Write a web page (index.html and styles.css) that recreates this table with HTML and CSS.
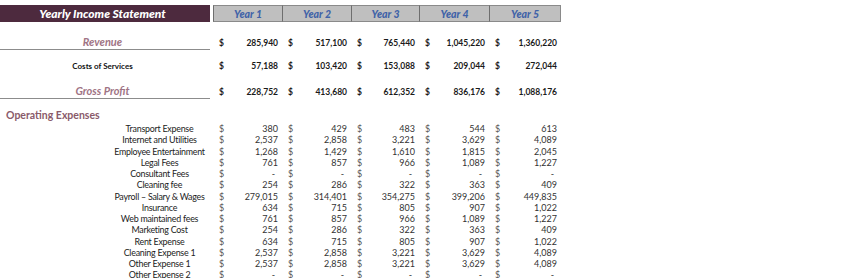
FILE: index.html
```html
<!DOCTYPE html>
<html>
<head>
<meta charset="utf-8">
<link rel="stylesheet" href="styles.css">
</head>
<body>
<div class="sheet">
  <div class="row head">
    <div class="title">Yearly Income Statement</div>
    <div class="yr">Year 1</div>
    <div class="yr">Year 2</div>
    <div class="yr">Year 3</div>
    <div class="yr">Year 4</div>
    <div class="yr">Year 5</div>
  </div>

  <div class="row sum rev">
    <div class="lab big">Revenue</div>
    <div class="num"><span>$</span><span>285,940</span></div>
    <div class="num"><span>$</span><span>517,100</span></div>
    <div class="num"><span>$</span><span>765,440</span></div>
    <div class="num"><span>$</span><span>1,045,220</span></div>
    <div class="num"><span>$</span><span>1,360,220</span></div>
  </div>

  <div class="row sum cos">
    <div class="lab small">Costs of Services</div>
    <div class="num"><span>$</span><span>57,188</span></div>
    <div class="num"><span>$</span><span>103,420</span></div>
    <div class="num"><span>$</span><span>153,088</span></div>
    <div class="num"><span>$</span><span>209,044</span></div>
    <div class="num"><span>$</span><span>272,044</span></div>
  </div>

  <div class="row sum gp">
    <div class="lab big">Gross Profit</div>
    <div class="num"><span>$</span><span>228,752</span></div>
    <div class="num"><span>$</span><span>413,680</span></div>
    <div class="num"><span>$</span><span>612,352</span></div>
    <div class="num"><span>$</span><span>836,176</span></div>
    <div class="num"><span>$</span><span>1,088,176</span></div>
  </div>

  <div class="opex">Operating Expenses</div>

  <div class="exp">
    <div class="row e"><div class="elab">Transport Expense</div><div class="num"><span>$</span><span>380</span></div><div class="num"><span>$</span><span>429</span></div><div class="num"><span>$</span><span>483</span></div><div class="num"><span>$</span><span>544</span></div><div class="num"><span>$</span><span>613</span></div></div>
    <div class="row e"><div class="elab">Internet and Utilities</div><div class="num"><span>$</span><span>2,537</span></div><div class="num"><span>$</span><span>2,858</span></div><div class="num"><span>$</span><span>3,221</span></div><div class="num"><span>$</span><span>3,629</span></div><div class="num"><span>$</span><span>4,089</span></div></div>
    <div class="row e"><div class="elab">Employee Entertainment</div><div class="num"><span>$</span><span>1,268</span></div><div class="num"><span>$</span><span>1,429</span></div><div class="num"><span>$</span><span>1,610</span></div><div class="num"><span>$</span><span>1,815</span></div><div class="num"><span>$</span><span>2,045</span></div></div>
    <div class="row e"><div class="elab">Legal Fees</div><div class="num"><span>$</span><span>761</span></div><div class="num"><span>$</span><span>857</span></div><div class="num"><span>$</span><span>966</span></div><div class="num"><span>$</span><span>1,089</span></div><div class="num"><span>$</span><span>1,227</span></div></div>
    <div class="row e"><div class="elab">Consultant Fees</div><div class="num"><span>$</span><span class="z">-</span></div><div class="num"><span>$</span><span class="z">-</span></div><div class="num"><span>$</span><span class="z">-</span></div><div class="num"><span>$</span><span class="z">-</span></div><div class="num"><span>$</span><span class="z">-</span></div></div>
    <div class="row e"><div class="elab">Cleaning fee</div><div class="num"><span>$</span><span>254</span></div><div class="num"><span>$</span><span>286</span></div><div class="num"><span>$</span><span>322</span></div><div class="num"><span>$</span><span>363</span></div><div class="num"><span>$</span><span>409</span></div></div>
    <div class="row e"><div class="elab">Payroll – Salary &amp; Wages</div><div class="num"><span>$</span><span>279,015</span></div><div class="num"><span>$</span><span>314,401</span></div><div class="num"><span>$</span><span>354,275</span></div><div class="num"><span>$</span><span>399,206</span></div><div class="num"><span>$</span><span>449,835</span></div></div>
    <div class="row e"><div class="elab">Insurance</div><div class="num"><span>$</span><span>634</span></div><div class="num"><span>$</span><span>715</span></div><div class="num"><span>$</span><span>805</span></div><div class="num"><span>$</span><span>907</span></div><div class="num"><span>$</span><span>1,022</span></div></div>
    <div class="row e"><div class="elab">Web maintained fees</div><div class="num"><span>$</span><span>761</span></div><div class="num"><span>$</span><span>857</span></div><div class="num"><span>$</span><span>966</span></div><div class="num"><span>$</span><span>1,089</span></div><div class="num"><span>$</span><span>1,227</span></div></div>
    <div class="row e"><div class="elab">Marketing Cost</div><div class="num"><span>$</span><span>254</span></div><div class="num"><span>$</span><span>286</span></div><div class="num"><span>$</span><span>322</span></div><div class="num"><span>$</span><span>363</span></div><div class="num"><span>$</span><span>409</span></div></div>
    <div class="row e"><div class="elab">Rent Expense</div><div class="num"><span>$</span><span>634</span></div><div class="num"><span>$</span><span>715</span></div><div class="num"><span>$</span><span>805</span></div><div class="num"><span>$</span><span>907</span></div><div class="num"><span>$</span><span>1,022</span></div></div>
    <div class="row e"><div class="elab">Cleaning Expense 1</div><div class="num"><span>$</span><span>2,537</span></div><div class="num"><span>$</span><span>2,858</span></div><div class="num"><span>$</span><span>3,221</span></div><div class="num"><span>$</span><span>3,629</span></div><div class="num"><span>$</span><span>4,089</span></div></div>
    <div class="row e"><div class="elab">Other Expense 1</div><div class="num"><span>$</span><span>2,537</span></div><div class="num"><span>$</span><span>2,858</span></div><div class="num"><span>$</span><span>3,221</span></div><div class="num"><span>$</span><span>3,629</span></div><div class="num"><span>$</span><span>4,089</span></div></div>
    <div class="row e"><div class="elab">Other Expense 2</div><div class="num"><span>$</span><span class="z">-</span></div><div class="num"><span>$</span><span class="z">-</span></div><div class="num"><span>$</span><span class="z">-</span></div><div class="num"><span>$</span><span class="z">-</span></div><div class="num"><span>$</span><span class="z">-</span></div></div>
  </div>
</div>
</body>
</html>
```

FILE: styles.css
```css
html, body {
  margin: 0;
  padding: 0;
  background: #ffffff;
}

body {
  font-family: Lato, "Open Sans", sans-serif;
  color: #1a1a1a;
  overflow: hidden;
  height: 278px;
}

.sheet {
  display: flex;
  flex-direction: column;
}

.row {
  display: grid;
  grid-template-columns: 213px 69px 69px 68px 70px 72px;
  align-items: center;
}

/* header */
.head {
  margin-top: 5px;
  height: 17px;
  align-items: stretch;
}

.title {
  width: 210px;
  background: #4d2a3e;
  color: #ffffff;
  font-weight: 900;
  font-style: italic;
  font-size: 12px;
  display: flex;
  align-items: center;
  justify-content: center;
  padding-right: 5px;
  box-sizing: border-box;
}

.yr {
  background: #bfbfbf;
  border-top: 1px solid #8a8a8a;
  border-bottom: 1px solid #8a8a8a;
  border-left: 1px solid #6e6e6e;
  color: #3f63a8;
  font-weight: 900;
  font-style: italic;
  font-size: 10.5px;
  display: flex;
  align-items: center;
  justify-content: center;
}

.yr:last-child {
  border-right: 1px solid #8a8a8a;
}

/* summary rows */
.sum {
  height: 15px;
}

.rev {
  margin-top: 13px;
}

.cos {
  margin-top: 8px;
}

.gp {
  margin-top: 11px;
}

.lab {
  width: 210px;
  text-align: center;
  padding-right: 5px;
  box-sizing: border-box;
}

.big {
  color: #a07485;
  font-style: italic;
  font-weight: 700;
  font-size: 11px;
  height: 15px;
  line-height: 13px;
  border-bottom: 1.5px solid #8c8c8c;
  box-sizing: border-box;
}

.small {
  font-weight: 700;
  font-size: 8px;
  color: #111111;
}

.num {
  display: flex;
  justify-content: space-between;
  padding: 0 4px 0 6px;
  font-size: 8.5px;
  font-weight: 700;
  color: #1a1a1a;
}

.z {
  padding-right: 3px;
}

/* operating expenses */
.opex {
  margin-top: 10px;
  padding-left: 6px;
  color: #8a5a6a;
  font-weight: 700;
  font-size: 10.5px;
  height: 13px;
  line-height: 13px;
}

.exp {
  display: flex;
  flex-direction: column;
  margin-top: 1px;
}

.e {
  height: 11.25px;
  line-height: 11.25px;
}

.elab {
  padding-left: 106px;
  text-align: center;
  font-size: 8.9px;
  letter-spacing: -0.25px;
  color: #222222;
}

.e .num {
  font-weight: 400;
  font-size: 9px;
  color: #333333;
}

.e .num span:first-child {
  color: #555555;
}
```
